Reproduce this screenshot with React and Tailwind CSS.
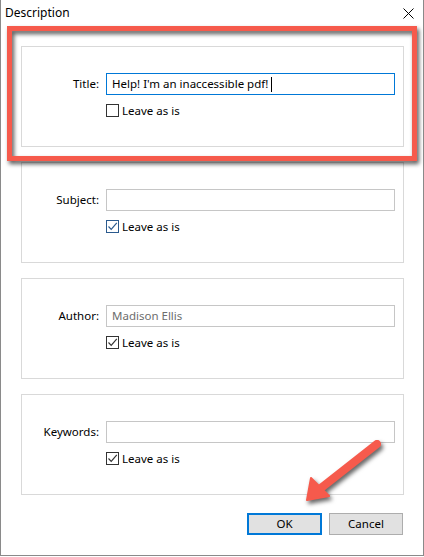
import React from "react";

function CheckBox({ checked, focused }) {
  const color = focused ? "#2b5a8e" : "#333333";
  return (
    <span
      className="w-[13px] h-[13px] border flex items-center justify-center bg-white"
      style={{ borderColor: color }}
    >
      {checked && (
        <svg width="11" height="11" viewBox="0 0 11 11">
          <path d="M1.5 5.5 L4.2 8.3 L9.8 1.8" fill="none" stroke={color} strokeWidth="1.2" />
        </svg>
      )}
    </span>
  );
}

function Field({ label, value, active, disabled, checked, focusedBox }) {
  return (
    <div className="h-[101px] border border-[#d9d9d9] pt-[26px] flex flex-col">
      <div className="flex items-center">
        <div className="w-[78px] text-right pr-[1px]">{label}</div>
        <div
          className={
            "ml-[6px] w-[289px] h-[22px] border flex items-center pl-[5px] " +
            (active ? "border-[#0078d7]" : "border-[#c6c6c6]") +
            (disabled ? " text-[#6d6d6d]" : " text-black")
          }
        >
          {value}
          {active && <span className="ml-[3px] w-[1px] h-[15px] bg-black" />}
        </div>
      </div>
      <div className="flex items-center mt-[8px] ml-[84px] gap-[3px] leading-[15px]">
        <CheckBox checked={checked} focused={focusedBox} />
        <span>Leave as is</span>
      </div>
    </div>
  );
}

export default function App() {
  return (
    <div className="relative w-[424px] h-[557px] bg-white overflow-hidden font-['Noto_Sans',sans-serif] text-[11.5px] text-black">
      <div className="h-[556px] border-l border-r border-b border-[#8a8a8a] flex flex-col">
        <div className="h-[26px] flex items-center justify-between pl-[4px] pr-[9px]">
          <span className="text-[12px]">Description</span>
          <svg width="11" height="11" viewBox="0 0 11 11">
            <path d="M0.5 0.5 L10.5 10.5 M10.5 0.5 L0.5 10.5" stroke="#000" strokeWidth="1" />
          </svg>
        </div>
        <div className="pl-[20px] pr-[19px] pt-[20px] flex flex-col gap-[15px]">
          <Field label="Title:" value="Help! I'm an inaccessible pdf!" active checked={false} />
          <Field label="Subject:" value="" checked focusedBox />
          <Field label="Author:" value="Madison Ellis" disabled checked />
          <Field label="Keywords:" value="" checked />
        </div>
        <div className="flex justify-end gap-[7px] pr-[20px] mt-[18px]">
          <button className="w-[75px] h-[22px] border-2 border-[#0078d7] bg-[#e1e1e1] flex items-center justify-center">
            OK
          </button>
          <button className="w-[74px] h-[22px] border border-[#adadad] bg-[#e1e1e1] flex items-center justify-center">
            Cancel
          </button>
        </div>
      </div>

      {/* red highlight box */}
      <div className="absolute left-[7px] top-[26px] w-[410px] h-[135px] border-[5px] border-[#f65a4c] drop-shadow-[2px_3px_2px_rgba(0,0,0,0.65)]" />

      {/* red arrow */}
      <svg
        className="absolute left-[295px] top-[430px] drop-shadow-[2px_3px_2px_rgba(0,0,0,0.6)]"
        width="100"
        height="80"
        viewBox="0 0 100 80"
      >
        <line x1="82" y1="14" x2="26" y2="58" stroke="#f65a4c" strokeWidth="8" strokeLinecap="round" />
        <path d="M12 70 L16 48 L34 66 Z" fill="#f65a4c" stroke="#f65a4c" strokeWidth="2" strokeLinejoin="round" />
      </svg>
    </div>
  );
}
